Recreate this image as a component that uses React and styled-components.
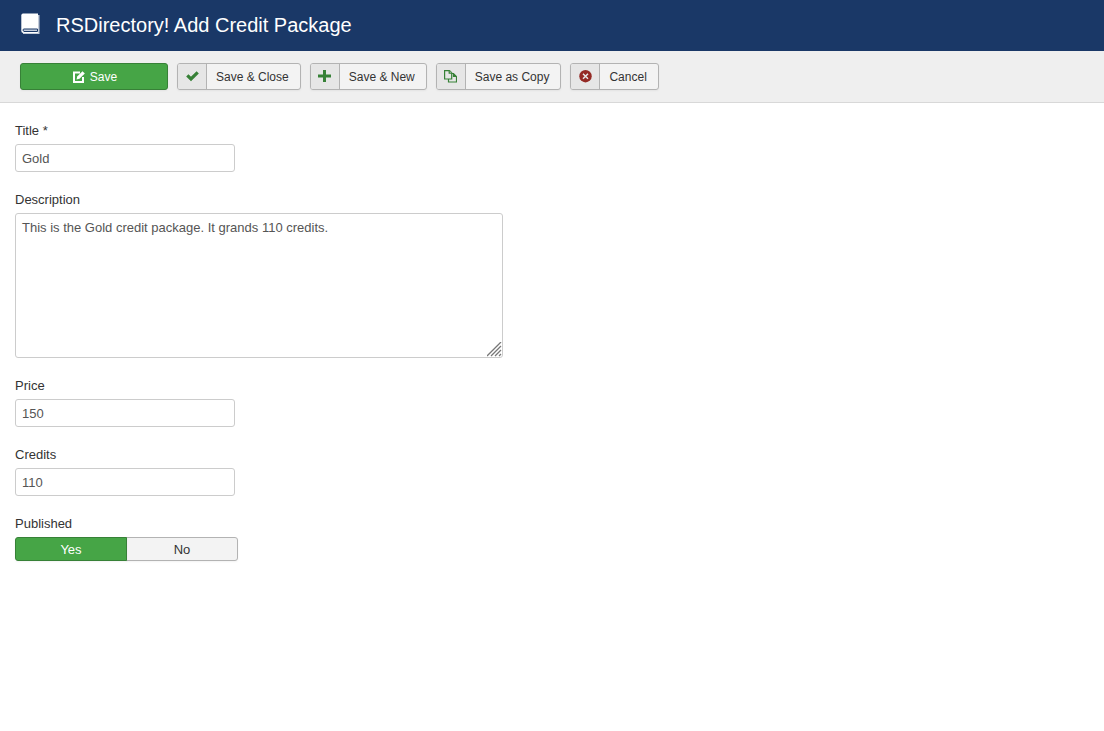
import { useState } from 'react';
import styled, { createGlobalStyle, css } from 'styled-components';

const GlobalStyle = createGlobalStyle`
  *, *::before, *::after {
    box-sizing: border-box;
  }

  body {
    margin: 0;
    background: #fff;
    color: #333;
    font-family: 'Liberation Sans', Arial, Helvetica, sans-serif;
    font-size: 13px;
    line-height: 18px;
  }

  button, input, textarea {
    font: inherit;
  }
`;

const Header = styled.header`
  display: flex;
  align-items: center;
  gap: 16px;
  padding: 10px 20px 11px;
  background: #1a3867;
  color: #fff;
`;

const PageTitle = styled.h1`
  margin: 0;
  font-size: 20px;
  font-weight: 400;
  line-height: 30px;
`;

const Toolbar = styled.div`
  display: flex;
  flex-wrap: wrap;
  gap: 9px;
  padding: 12px 20px;
  background: #efefef;
  border-bottom: 1px solid #d8d8d8;
`;

const BaseButton = styled.button`
  display: flex;
  align-items: stretch;
  height: 27px;
  padding: 0;
  border: 1px solid #b3b3b3;
  border-radius: 3px;
  background: #f3f3f3;
  color: #333;
  font-size: 12px;
  cursor: pointer;
  overflow: hidden;
  box-shadow: 0 1px 2px rgba(0, 0, 0, 0.05);
`;

const SaveButton = styled(BaseButton)`
  align-items: center;
  justify-content: center;
  gap: 5px;
  width: 148px;
  padding-left: 2px;
  border-color: #378137;
  background: #46a546;
  color: #fff;
`;

const IconCell = styled.span`
  display: flex;
  align-items: center;
  justify-content: center;
  width: 29px;
  border-right: 1px solid #b3b3b3;
  background: #e6e6e6;
  color: ${props => props.$color};
`;

const ButtonText = styled.span`
  padding: 0 11px 0 9px;
  line-height: 26px;
`;

const Form = styled.form`
  display: flex;
  flex-direction: column;
  align-items: flex-start;
  gap: 19px;
  padding: 19px 15px;
`;

const Field = styled.div`
  max-width: 100%;
`;

const Label = styled.label`
  display: block;
  margin-bottom: 4px;
`;

const Fieldset = styled.fieldset`
  min-width: 0;
  margin: 0;
  padding: 0;
  border: 0;
`;

const Legend = styled.legend`
  margin-bottom: 4px;
  padding: 0;
`;

const control = css`
  display: block;
  max-width: 100%;
  border: 1px solid #ccc;
  border-radius: 3px;
  background: #fff;
  color: #555;
  line-height: 18px;
`;

const Input = styled.input`
  ${control}
  width: 220px;
  height: 28px;
  padding: 4px 6px;
`;

const TextareaBox = styled.div`
  position: relative;
  width: 488px;
  max-width: 100%;
`;

const Textarea = styled.textarea`
  ${control}
  width: 100%;
  height: 145px;
  padding: 5px 6px;
  resize: none;
`;

const Grip = styled.svg`
  position: absolute;
  right: 1px;
  bottom: 1px;
  pointer-events: none;
`;

const Switch = styled.div`
  display: flex;
`;

const Radio = styled.input`
  position: absolute;
  opacity: 0;
`;

const Option = styled.label`
  width: 112px;
  height: 24px;
  border: 1px solid #b3b3b3;
  border-radius: 0 3px 3px 0;
  background: #f3f3f3;
  line-height: 24px;
  text-align: center;
  cursor: pointer;
  box-shadow: 0 1px 2px rgba(0, 0, 0, 0.05);

  &:first-of-type {
    position: relative;
    border-radius: 3px 0 0 3px;
  }

  & ~ & {
    margin-left: -1px;
  }

  ${Radio}:checked + & {
    border-color: #378137;
    background: #46a546;
    color: #fff;
  }
`;

const BookIcon = () => (
  <svg width="20" height="24" viewBox="0 0 20 24" aria-hidden="true">
    <path d="M18 2h1.500v19H3v-1h15z" fill="#c3cbd9" />
    <path d="M3 .5h15V20H3.500Q1.300 20 1.300 18V2.500Q1.300.5 3 .5z" fill="#fff" />
    <path d="M17.500 16H4Q3 16 3 17t1 1.500h13.500z" fill="#c3cbd9" stroke="#1a3867" strokeWidth="1" />
  </svg>
);

const EditIcon = () => (
  <svg width="12" height="12" viewBox="0 0 12 12" aria-hidden="true">
    <path d="M7 1.500H1V11h9V6" fill="none" stroke="currentColor" strokeWidth="2" />
    <path d="M3.500 8.500l.7-3L9.500.2l2.300 2.300-5.300 5.300z" fill="currentColor" />
  </svg>
);

const CheckIcon = () => (
  <svg width="13" height="13" viewBox="0 0 13 13" aria-hidden="true">
    <path d="M1.300 5.300l3.700 3.700L11.700 2.300" fill="none" stroke="currentColor" strokeWidth="3.200" />
  </svg>
);

const PlusIcon = () => (
  <svg width="13" height="13" viewBox="0 0 13 13" aria-hidden="true">
    <path d="M5 0h3v4.500h5v3H8V12H5V7.500H0v-3h5z" fill="currentColor" />
  </svg>
);

const CopyIcon = () => (
  <svg width="13" height="13" viewBox="0 0 13 13" aria-hidden="true">
    <g fill="#e6e6e6" stroke="currentColor" strokeWidth="1.200">
      <path d="M4.500 3.500h5l3 3v5.500h-8zM9.500 3.500v3h3" />
      <path d="M.6.6h4.900l2.200 2.200V9H.6z" />
      <path d="M5.200.6v2.500h2.500" />
    </g>
  </svg>
);

const CancelIcon = () => (
  <svg width="13" height="13" viewBox="0 0 13 13" aria-hidden="true">
    <circle cx="6.500" cy="6.200" r="6.200" fill="currentColor" />
    <path d="M4 3.700l5 5M9 3.700l-5 5" stroke="#e6e6e6" strokeWidth="1.500" />
  </svg>
);

const actions = [
  { text: 'Save & Close', color: '#378137', Icon: CheckIcon },
  { text: 'Save & New', color: '#378137', Icon: PlusIcon },
  { text: 'Save as Copy', color: '#378137', Icon: CopyIcon },
  { text: 'Cancel', color: '#942a25', Icon: CancelIcon },
];

function App() {
  const [values, setValues] = useState({
    title: 'Gold',
    description: 'This is the Gold credit package. It grands 110 credits.',
    price: '150',
    credits: '110',
    published: 'yes',
  });

  const handleChange = (e) => {
    setValues({ ...values, [e.target.name]: e.target.value });
  };

  return (
    <>
      <GlobalStyle />
      <Header>
        <BookIcon />
        <PageTitle>RSDirectory! Add Credit Package</PageTitle>
      </Header>
      <Toolbar>
        <SaveButton type="button"><EditIcon />Save</SaveButton>
        {actions.map(({ text, color, Icon }) => (
          <BaseButton type="button" key={text}>
            <IconCell $color={color}><Icon /></IconCell>
            <ButtonText>{text}</ButtonText>
          </BaseButton>
        ))}
      </Toolbar>
      <Form>
        <Field>
          <Label htmlFor="title">Title *</Label>
          <Input id="title" name="title" value={values.title} onChange={handleChange} />
        </Field>
        <Field>
          <Label htmlFor="description">Description</Label>
          <TextareaBox>
            <Textarea id="description" name="description" value={values.description} onChange={handleChange} />
            <Grip width="15" height="15" viewBox="0 0 15 15" aria-hidden="true">
              <path d="M0 14L14 0M4 14L14 4M8 14l6-6M12 14l2-2" stroke="#777" strokeWidth="1.300" />
            </Grip>
          </TextareaBox>
        </Field>
        <Field>
          <Label htmlFor="price">Price</Label>
          <Input id="price" name="price" value={values.price} onChange={handleChange} />
        </Field>
        <Field>
          <Label htmlFor="credits">Credits</Label>
          <Input id="credits" name="credits" value={values.credits} onChange={handleChange} />
        </Field>
        <Fieldset>
          <Legend>Published</Legend>
          <Switch>
            <Radio type="radio" id="published-yes" name="published" value="yes" checked={values.published === 'yes'} onChange={handleChange} />
            <Option htmlFor="published-yes">Yes</Option>
            <Radio type="radio" id="published-no" name="published" value="no" checked={values.published === 'no'} onChange={handleChange} />
            <Option htmlFor="published-no">No</Option>
          </Switch>
        </Fieldset>
      </Form>
    </>
  );
}

export default App;
